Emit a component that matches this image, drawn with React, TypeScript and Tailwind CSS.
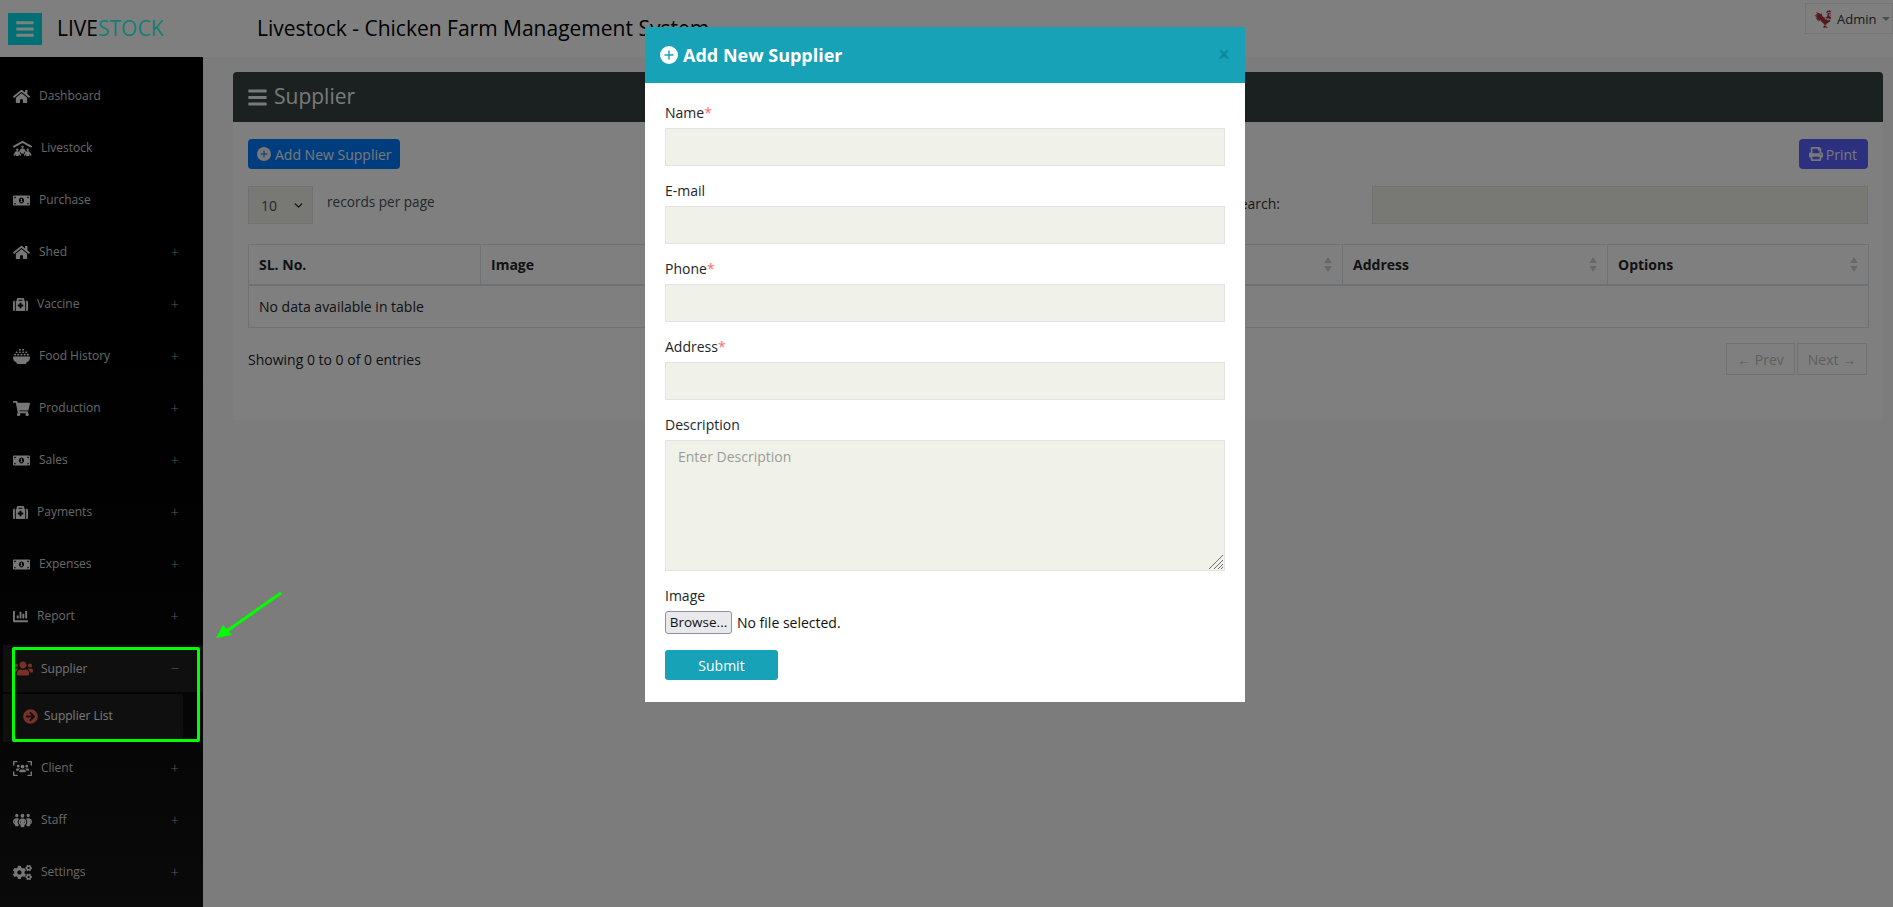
import { ChevronDown } from 'lucide-react';
import { GiRooster } from 'react-icons/gi';
import {
  FaArrowCircleRight,
  FaBars,
  FaChartBar,
  FaCogs,
  FaHome,
  FaMedkit,
  FaMoneyBillAlt,
  FaPrint,
  FaShoppingCart,
  FaUsers,
} from 'react-icons/fa';
import { FaBowlRice, FaPeopleGroup, FaPeopleRoof, FaUsersViewfinder } from 'react-icons/fa6';

const MENU = [
  { label: 'Dashboard', icon: FaHome, iconClass: 'w-[17px]', toggle: false },
  { label: 'Livestock', icon: FaPeopleRoof, iconClass: 'w-[19px]', toggle: false },
  { label: 'Purchase', icon: FaMoneyBillAlt, iconClass: 'w-[17px]', toggle: false },
  { label: 'Shed', icon: FaHome, iconClass: 'w-[17px]', toggle: true },
  { label: 'Vaccine', icon: FaMedkit, iconClass: 'w-[15px]', toggle: true },
  { label: 'Food History', icon: FaBowlRice, iconClass: 'w-[17px]', toggle: true },
  { label: 'Production', icon: FaShoppingCart, iconClass: 'w-[17px]', toggle: true },
  { label: 'Sales', icon: FaMoneyBillAlt, iconClass: 'w-[17px]', toggle: true },
  { label: 'Payments', icon: FaMedkit, iconClass: 'w-[15px]', toggle: true },
  { label: 'Expenses', icon: FaMoneyBillAlt, iconClass: 'w-[17px]', toggle: true },
  { label: 'Report', icon: FaChartBar, iconClass: 'w-[15px]', toggle: true },
];

const MENU_AFTER = [
  { label: 'Client', icon: FaUsersViewfinder, iconClass: 'w-[19px]', toggle: true },
  { label: 'Staff', icon: FaPeopleGroup, iconClass: 'w-[19px]', toggle: true },
  { label: 'Settings', icon: FaCogs, iconClass: 'w-[19px]', toggle: true },
];

const COLUMNS = [
  { label: 'SL. No.', width: 'w-[232px]', sort: false },
  { label: 'Image', width: 'w-[232px]', sort: false },
  { label: 'Name', width: 'w-[215px]', sort: true },
  { label: 'E-mail', width: 'w-[215px]', sort: true },
  { label: 'Phone', width: 'w-[200px]', sort: true },
  { label: 'Address', width: 'w-[265px]', sort: true },
  { label: 'Options', width: 'w-[261px]', sort: true },
];

function PlusCircle({ className }: { className: string }) {
  return (
    <svg viewBox="0 0 24 24" className={className} fill="currentColor">
      <path
        fillRule="evenodd"
        d="M12 0a12 12 0 1 0 0 24 12 12 0 0 0 0-24zM11 6h2v5h5v2h-5v5h-2v-5H6v-2h5z"
      />
    </svg>
  );
}

function MenuRow({ item }: { item: (typeof MENU)[number] }) {
  const Icon = item.icon;
  return (
    <div className="flex h-[52px] items-center pl-[13px] pr-[24px] text-[12px] text-[#cfcfcf]">
      <Icon className={`${item.iconClass} h-[17px] shrink-0 text-[#eeeeee]`} />
      <span className="ml-[9px] flex-1">{item.label}</span>
      {item.toggle && <span className="text-[15px] font-light text-[#aaaaaa]">+</span>}
    </div>
  );
}

function Sidebar() {
  return (
    <aside className="h-[850px] w-[203px] shrink-0 bg-gradient-to-b from-[#000000] to-[#141414] pt-[13px]">
      {MENU.map((item) => (
        <MenuRow key={item.label} item={item} />
      ))}
      <div className="mb-[2px] ml-[3px] mt-[3px] flex h-[47px] items-center bg-[#1e1e1e] pl-[10px] pr-[24px] text-[12px] text-[#e0e0e0]">
        <FaUsers className="h-[19px] w-[20px] shrink-0 text-[#f0604f]" />
        <span className="ml-[8px] flex-1">Supplier</span>
        <span className="text-[15px] font-light text-[#aaaaaa]">−</span>
      </div>
      <div className="ml-[3px] mr-5 flex h-[48px] items-center bg-[#1e1e1e] pb-1 pl-[20px] text-[12px] text-[#f0f0f0]">
        <FaArrowCircleRight className="h-[15px] w-[15px] shrink-0 text-[#f0604f]" />
        <span className="ml-[6px]">Supplier List</span>
      </div>
      {MENU_AFTER.map((item) => (
        <MenuRow key={item.label} item={item} />
      ))}
    </aside>
  );
}

function SortArrows() {
  return (
    <svg viewBox="0 0 8 16" className="h-[15px] w-[8px] text-[#d0d0d0]" fill="currentColor">
      <path d="M4 0 8 6.5H0zM4 16 0 9.5h8z" />
    </svg>
  );
}

function SupplierPanel() {
  return (
    <section className="ml-[30px] mt-[15px] h-[348px] w-[1650px] bg-white">
      <div className="flex h-[50px] items-center gap-[7px] rounded-t bg-[#344240] pl-[15px] text-[21px] text-[#f2f2f2]">
        <FaBars className="h-[21px] w-[19px]" />
        <span>Supplier</span>
      </div>
      <div className="px-[15px] pt-[17px]">
        <div className="flex items-center justify-between">
          <button className="flex h-[30px] items-center gap-[4px] rounded bg-[#007bff] pl-[9px] pr-[8px] text-[14px] text-[#f0f0f0]">
            <PlusCircle className="h-[14px] w-[14px]" />
            Add New Supplier
          </button>
          <button className="flex h-[30px] items-center gap-[3px] rounded bg-[#5860ff] pl-[10px] pr-[11px] text-[14px] text-[#f0f0f0]">
            <FaPrint className="h-[14px] w-[14px]" />
            Print
          </button>
        </div>
        <div className="mt-[17px] flex items-center justify-between">
          <div className="flex items-center">
            <div className="relative h-[38px] w-[65px]">
              <select className="h-full w-full appearance-none border border-[#e3e3e3] bg-[#f0f1e9] pl-3 text-[14px] text-[#495057]">
                <option>10</option>
              </select>
              <ChevronDown className="pointer-events-none absolute right-[8px] top-[13px] h-[13px] w-[13px] text-[#222222]" strokeWidth={2.5} />
            </div>
            <span className="ml-[14px] -translate-y-[3px] text-[13.6px] text-[#495057]">records per page</span>
          </div>
          <div className="flex items-center">
            <span className="-translate-y-[2px] text-[14px] text-[#333333]">Search:</span>
            <input className="ml-[92px] h-[38px] w-[496px] border border-[#e3e3e3] bg-[#f0f1e9]" />
          </div>
        </div>
        <table className="mt-[20px] w-[1620px] table-fixed border-collapse text-[14px] text-[#212529]">
          <thead>
            <tr className="h-[40px] border-b-2 border-[#dee2e6]">
              {COLUMNS.map((col) => (
                <th key={col.label} className={`${col.width} border border-b-2 border-[#dee2e6] px-[10px] text-left font-bold`}>
                  <div className="flex items-center justify-between">
                    {col.label}
                    {col.sort && <SortArrows />}
                  </div>
                </th>
              ))}
            </tr>
          </thead>
          <tbody>
            <tr className="h-[43px]">
              <td colSpan={7} className="border border-[#dee2e6] px-[10px]">
                No data available in table
              </td>
            </tr>
          </tbody>
        </table>
        <div className="mt-[15px] flex items-center justify-between pr-px text-[14px] text-[#212529]">
          <span>Showing 0 to 0 of 0 entries</span>
          <div className="flex gap-[2px] text-[#bdbdbd]">
            <span className="flex h-[32px] w-[69px] items-center justify-center border border-[#dee2e6]">← Prev</span>
            <span className="flex h-[32px] w-[70px] items-center justify-center border border-[#dee2e6]">Next →</span>
          </div>
        </div>
      </div>
    </section>
  );
}

function Field({ label, required }: { label: string; required?: boolean }) {
  return (
    <div className="mb-[14px]">
      <label className="mb-[5px] block text-[14px] leading-[21px] text-[#212529]">
        {label}
        {required && <span className="text-[#ff6b6b]">*</span>}
      </label>
      <input className="block h-[38px] w-full border border-[#e3e3e3] bg-[#f0f1e9]" />
    </div>
  );
}

function SupplierModal() {
  return (
    <div className="absolute inset-0 pt-[27px]">
      <div className="ml-[645px] h-[675px] w-[600px] bg-white">
        <div className="flex h-[56px] items-center justify-between bg-[#17a2b8] pl-[15px] pr-[15px]">
          <h2 className="flex items-center gap-[5px] text-[18px] font-bold text-white">
            <PlusCircle className="h-[18px] w-[18px]" />
            Add New Supplier
          </h2>
          <span className="-translate-y-px text-[21px] font-bold leading-none text-[#0e8a9c]">×</span>
        </div>
        <form className="px-5 pt-[19px]">
          <Field label="Name" required />
          <Field label="E-mail" />
          <Field label="Phone" required />
          <Field label="Address" required />
          <div className="mb-[14px]">
            <label className="mb-[5px] block text-[14px] leading-[21px] text-[#212529]">Description</label>
            <div className="relative h-[131px]">
              <textarea
                placeholder="Enter Description"
                className="block h-full w-full resize-none border border-[#e3e3e3] bg-[#f0f1e9] px-[12px] py-[5px] text-[14px] placeholder:text-[#9b9d97]"
              />
              <svg viewBox="0 0 14 14" className="absolute bottom-[2px] right-[2px] h-[14px] w-[14px] text-[#6f6f6f]" stroke="currentColor" strokeWidth="1">
                <path d="M0 14 14 0M5 14 14 5M9 14 14 9M12 14 14 12" />
              </svg>
            </div>
          </div>
          <label className="mb-[5px] block text-[14px] leading-[21px] text-[#212529]">Image</label>
          <div className="flex items-center gap-[5px] text-[14px] text-[#111111]">
            <button type="button" className="h-[23px] w-[67px] rounded-[3px] border border-[#8f8f9d] bg-[#e9e9ed] text-[13.5px]">
              Browse...
            </button>
            No file selected.
          </div>
          <button type="button" className="mt-[16px] h-[30px] w-[113px] rounded-[3px] bg-[#17a2b8] text-[14px] text-white">
            Submit
          </button>
        </form>
      </div>
    </div>
  );
}

export default function App() {
  return (
    <div className="relative h-[907px] w-[1893px] overflow-hidden bg-[#f6f8f6] font-['Open_Sans',sans-serif]">
      <header className="flex h-[57px] items-center bg-white pl-2">
        <button className="flex h-[32px] w-[34px] items-center justify-center bg-[#00e0ea] text-white">
          <FaBars className="h-[20px] w-[18px]" />
        </button>
        <div className="ml-[15px] w-[200px] text-[21px] text-black">
          LIVE<span className="font-medium text-[#28ffe6]">STOCK</span>
        </div>
        <h1 className="text-[21px] text-black">Livestock - Chicken Farm Management System</h1>
        <div className="ml-auto flex h-[31px] w-[88px] -translate-y-[10px] items-center border border-[#e8e8e8] pl-[7px] text-[13px] text-[#333333]">
          <GiRooster className="h-[20px] w-[20px] text-[#a8323a]" />
          <span className="ml-[4px] translate-y-px">Admin</span>
          <span className="ml-[6px] h-0 w-0 border-x-[4px] border-t-[4px] border-x-transparent border-t-[#999999]" />
        </div>
      </header>
      <div className="flex">
        <Sidebar />
        <SupplierPanel />
      </div>

      {/* backdrop + modal sit over the page */}
      <div className="absolute inset-0 bg-black/50" />
      <SupplierModal />

      {/* green markup drawn on top of the screenshot */}
      <div className="absolute left-[12px] top-[647px] h-[95px] w-[188px] rounded-[2px] border-[3px] border-[#00ff00]" />
      <svg className="absolute left-[210px] top-[585px] h-[60px] w-[80px]" viewBox="0 0 80 60" fill="none">
        <path d="M71 8 14 48" stroke="#00ff00" strokeWidth="3" />
        <path d="M6 53 13 40 22 50z" fill="#00ff00" />
      </svg>
    </div>
  );
}
